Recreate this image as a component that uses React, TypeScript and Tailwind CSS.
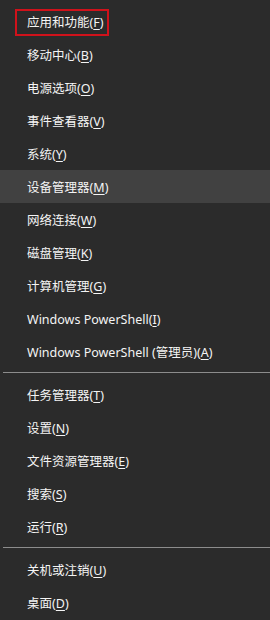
import React from 'react';

type MenuItem = { label: string; key: string; active?: boolean; boxed?: boolean };

const groups: MenuItem[][] = [
  [
    { label: '应用和功能', key: 'F', boxed: true },
    { label: '移动中心', key: 'B' },
    { label: '电源选项', key: 'O' },
    { label: '事件查看器', key: 'V' },
    { label: '系统', key: 'Y' },
    { label: '设备管理器', key: 'M', active: true },
    { label: '网络连接', key: 'W' },
    { label: '磁盘管理', key: 'K' },
    { label: '计算机管理', key: 'G' },
    { label: 'Windows PowerShell', key: 'I' },
    { label: 'Windows PowerShell (管理员)', key: 'A' },
  ],
  [
    { label: '任务管理器', key: 'T' },
    { label: '设置', key: 'N' },
    { label: '文件资源管理器', key: 'E' },
    { label: '搜索', key: 'S' },
    { label: '运行', key: 'R' },
  ],
  [
    { label: '关机或注销', key: 'U' },
    { label: '桌面', key: 'D' },
  ],
];

function Row({ item }: { item: MenuItem }) {
  return (
    <div
      className={`relative flex h-[33px] items-center pl-[27px] pt-[3px] text-[12.5px] text-[#f4f4f4] ${
        item.active ? 'bg-[#414141]' : ''
      }`}
    >
      <span className="whitespace-nowrap">
        {item.label}(<span className="underline underline-offset-2">{item.key}</span>)
      </span>
      {item.boxed && (
        <div className="absolute left-[15px] top-[4px] h-[27px] w-[94px] border-2 border-[#d0121b]" />
      )}
    </div>
  );
}

export default function App() {
  return (
    <div
      className="h-[620px] w-[270px] overflow-hidden bg-[#2b2b2b] pt-[5px]"
      style={{ fontFamily: '"Noto Sans", "Noto Sans CJK SC", sans-serif' }}
    >
      {groups.map((group, gi) => (
        <div key={gi}>
          {gi > 0 && <div className="ml-[3px] mt-[4px] mb-[5px] h-px bg-[#8c8c8c]" />}
          {group.map((item) => (
            <Row key={item.key} item={item} />
          ))}
        </div>
      ))}
    </div>
  );
}
